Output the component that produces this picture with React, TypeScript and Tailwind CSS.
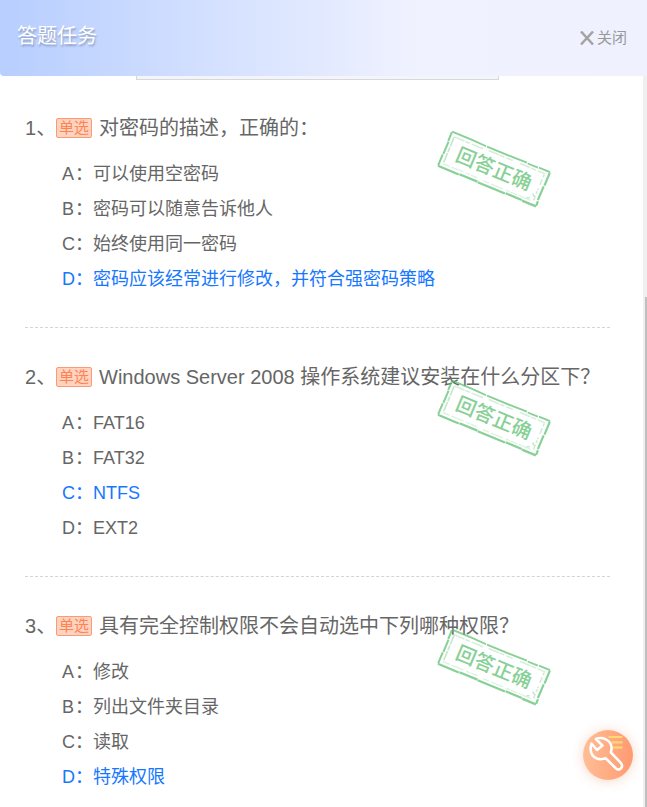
const STACK = "font-['Liberation_Sans','Noto_Sans_CJK_SC',sans-serif]";

type Question = {
  title: string;
  options: string[];
  answer: number;
};

const questions: Question[] = [
  {
    title: '对密码的描述，正确的：',
    options: ['可以使用空密码', '密码可以随意告诉他人', '始终使用同一密码', '密码应该经常进行修改，并符合强密码策略'],
    answer: 3,
  },
  {
    title: 'Windows Server 2008 操作系统建议安装在什么分区下？',
    options: ['FAT16', 'FAT32', 'NTFS', 'EXT2'],
    answer: 2,
  },
  {
    title: '具有完全控制权限不会自动选中下列哪种权限？',
    options: ['修改', '列出文件夹目录', '读取', '特殊权限'],
    answer: 3,
  },
];

function Stamp() {
  return (
    <svg
      className="pointer-events-none absolute top-[48px] right-[56px] h-[84px] w-[120px] opacity-70"
      viewBox="0 0 120 84"
      role="img"
      aria-label="回答正确"
    >
      <g transform="translate(60 42) rotate(22.5)" fill="none" stroke="#55bd6b">
        <path d="M-53 -18.500H-32L-16 -18M-15 -18H8L28 -18.500M29 -18H40M41 -18.500H53" strokeWidth="1.800" />
        <path d="M53 -18V-4M52.500 -3V12M53 13V18" strokeWidth="2.200" />
        <path d="M53 18.500H38M37.500 18H20M19.500 18.500H-10M-10.500 18H-30M-30.500 18.500H-53" strokeWidth="2.200" />
        <path d="M-53 18V6M-52.500 5.500V-8M-53 -8.500V-18" strokeWidth="2" />
        <path d="M-49 -14.500H-18M-12 -15H14M22 -15H49" strokeWidth="1.500" opacity=".35" strokeDasharray="11 1 5 2 17 3" />
        <path d="M-49 14.500H-12M-6 15H49" strokeWidth="1.200" opacity=".3" strokeDasharray="7 2 13 3 4 1" />
        <path d="M-49 -14V14" strokeWidth="1.600" opacity=".5" strokeDasharray="10 1 5 1" />
        <path d="M48.500 -14V14" strokeWidth="1.500" opacity=".4" strokeDasharray="3 2 6 4 2 1" />
        <path d="M45 8L48 10M41 14L44 13" strokeWidth="1.500" opacity=".5" />
        <text
          x="0"
          y="7"
          textAnchor="middle"
          className="text-[20px] font-medium"
          fill="#55bd6b"
          stroke="none"
        >
          回答正确
        </text>
      </g>
    </svg>
  );
}

function QuestionItem({ question, index, last }: { question: Question; index: number; last: boolean }) {
  return (
    <section className={`relative pt-[35px] pb-[30px] ${last ? '' : 'border-b border-dashed border-[#d4d4d4]'}`}>
      <h2 className="flex items-center text-[20px] leading-[28px] whitespace-nowrap text-[#666]">
        <span className="w-[31px] shrink-0">{index + 1}、</span>
        <span className="mr-[7px] flex h-5 w-9 shrink-0 items-center justify-center rounded-xs border border-[#ff9a70] bg-[#ffd3c2] text-[15px] leading-[18px] text-[#ff8350]">
          单选
        </span>
        <span>{question.title}</span>
      </h2>
      <ol className="mt-[15px] pl-[37px] text-[18px] leading-[35px]">
        {question.options.map((option, i) => (
          <li key={option} className={`flex ${i === question.answer ? 'text-[#1677ff]' : 'text-[#666]'}`}>
            <span className="w-[13px] shrink-0">{'ABCD'[i]}</span>
            <span className="w-[18px] shrink-0">：</span>
            <span>{option}</span>
          </li>
        ))}
      </ol>
      <Stamp />
    </section>
  );
}

export default function App() {
  return (
    <div lang="zh-CN" className={`flex min-h-screen flex-col bg-white ${STACK}`}>
      <header className="flex h-[76px] items-center justify-between rounded-bl-sm bg-linear-to-r from-[#b7ceff] via-[#f0f2ff] via-65% to-[#f0f1ff] pr-5 pl-[17px]">
        <h1 className="-mt-1 text-[20px] leading-7 text-white [text-shadow:1px_2px_2px_rgba(0,0,0,0.25)]">
          答题任务
        </h1>
        <button type="button" className="flex items-center gap-[3px] text-[15px] leading-6 text-[#999]">
          <svg className="size-[14px]" viewBox="0 0 14 14" aria-hidden="true">
            <path d="M1 .500 13 13.500M13 .500 1 13.500" stroke="#a3a3a3" strokeWidth="2.500" />
          </svg>
          关闭
        </button>
      </header>

      <div className="flex grow">
        <main className="min-w-0 grow pr-[33px] pl-[25px]">
          <div className="-mb-px ml-[111px] h-1 w-[363px] border border-t-0 border-[#d3d9e4] bg-[#f5f5f5]" />
          {questions.map((question, i) => (
            <QuestionItem key={question.title} question={question} index={i} last={i === questions.length - 1} />
          ))}
        </main>
        <div className="flex w-1 shrink-0 flex-col items-end bg-[#f0f0f0] pt-[221px] pb-[2px]">
          <div className="w-[2px] grow bg-[#bfbfbf]" />
        </div>
      </div>

      <button
        type="button"
        aria-label="工具"
        className="fixed right-[14px] bottom-[27px] size-[50px] rounded-full bg-linear-to-r from-[#ffbe96] to-[#fe9a70] shadow-[0_1px_12px_rgba(230,120,70,0.3)]"
      >
        <svg className="size-full" viewBox="0 0 50 50" fill="none" aria-hidden="true">
          <path d="M25.500 7H39.500M29 12.300H39.500M30 17.500H39.500" stroke="#ffd977" strokeWidth="2.200" />
          <path
            d="M12.800 9C19 6.500 28 9.500 28.600 17.500C28.700 19.500 28.300 21 27.800 22.300L38 33.200C41 37 36.500 41.500 33 38.500L22.500 28.200C16 31 8.500 27.500 7.700 20.500C7.400 18 7.800 15.500 8.500 13.500L14 20L19.500 15.500Z"
            stroke="#fff"
            strokeWidth="2.500"
            strokeLinejoin="round"
          />
        </svg>
      </button>
    </div>
  );
}
